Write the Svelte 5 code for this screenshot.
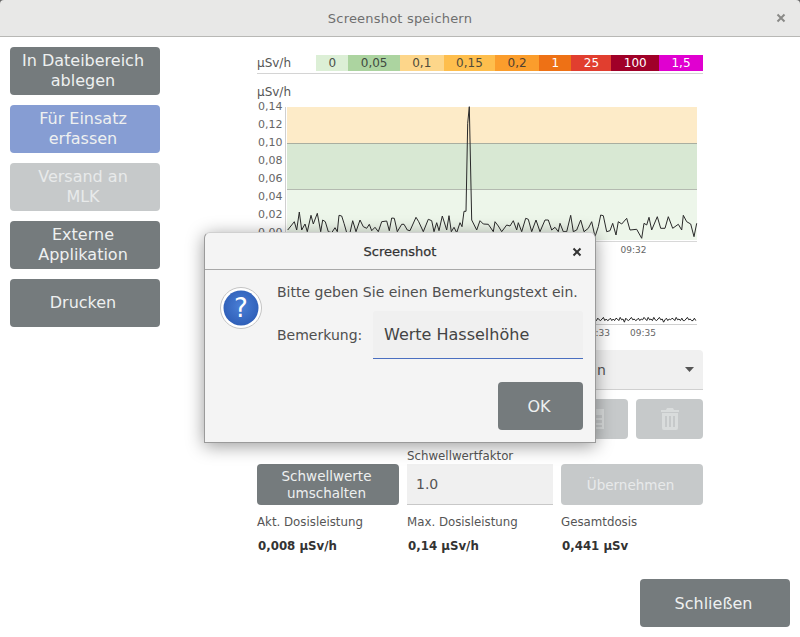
<script>
  const sideButtons = [
    { label: 'In Dateibereich ablegen', kind: 'dark' },
    { label: 'Für Einsatz erfassen', kind: 'blue' },
    { label: 'Versand an MLK', kind: 'off' },
    { label: 'Externe Applikation', kind: 'dark' },
    { label: 'Drucken', kind: 'dark' }
  ];

  const legend = [
    { text: '0', bg: '#dcefd6', fg: '#4a4f4a' },
    { text: '0,05', bg: '#acd4a0', fg: '#3f4a3f' },
    { text: '0,1', bg: '#fdd68a', fg: '#4f4a3a' },
    { text: '0,15', bg: '#febe4d', fg: '#4f4a3a' },
    { text: '0,2', bg: '#fb9d2c', fg: '#4f4030' },
    { text: '1', bg: '#ee7115', fg: '#fff' },
    { text: '25', bg: '#e13e2f', fg: '#fff' },
    { text: '100', bg: '#a00028', fg: '#fff' },
    { text: '1,5', bg: '#e000d0', fg: '#fff' }
  ];

  const ticks = ['0,14', '0,12', '0,10', '0,08', '0,06', '0,04', '0,02', '0,00'];

  // trace read off the reference at 3x, offset to the chart's own origin
  const raw = [
    113,570, 125,555, 133,545, 140,570, 148,516, 155,570, 165,552, 172,575, 183,526, 190,552, 202,520, 212,575,
    218,540, 226,545, 235,575, 245,578, 255,563, 262,575, 267,526, 275,528, 282,550, 290,578, 300,578, 308,542,
    318,575, 330,540, 340,560, 350,565, 358,553, 365,572, 375,562, 385,575, 395,545, 410,543, 418,572, 425,534,
    433,535, 442,575, 455,553, 462,553, 472,570, 480,572, 498,532, 506,545, 520,575, 535,538, 545,542, 552,575,
    560,548, 567,572, 577,528, 590,570, 597,527, 604,575, 612,562, 620,578, 630,548, 636,560, 642,514, 648,514,
    653,250, 658,200, 660,300, 665,540, 680,570, 690,542, 700,552, 715,553, 730,575, 735,545, 745,558, 755,575,
    770,555, 780,558, 790,542, 800,570, 805,548, 815,575, 827,535, 835,538, 845,575, 858,540, 870,575, 885,540,
    895,540, 905,570, 915,562, 925,575, 930,550, 940,575, 950,575, 962,526, 970,575, 980,570, 992,540, 1002,575,
    1015,565, 1025,545, 1035,590, 1045,560, 1052,525, 1060,527, 1070,575, 1080,572, 1088,550, 1098,585, 1105,545,
    1115,552, 1130,535, 1140,570, 1160,568, 1175,595, 1182,550, 1190,555, 1197,532, 1205,570, 1222,530, 1232,565,
    1245,565, 1255,530, 1268,565, 1285,553, 1295,570, 1300,526, 1310,545, 1322,552, 1332,590, 1340,550
  ];
  let trace = '';
  for (let i = 0; i < raw.length; i += 2) {
    trace += `${(raw[i] / 3 - 7).toFixed(1)},${(raw[i + 1] / 3 - 40).toFixed(1)} `;
  }

  // the small overview strip only shows past the dialog, a dense flat noise
  const wobble = [0, 2, -1, 1, 2, 0, -2, 1, 0, 2, 1, -1, 2, 0, 1, -1, 0, 2, -2, 1];
  let miniTrace = '';
  for (let x = 30, i = 0; x <= 440; x += 1.4, i++) {
    miniTrace += `${x.toFixed(1)},${61 + wobble[i % wobble.length] * (i % 7 === 3 ? 1.6 : 0.8)} `;
  }
</script>

<div class="window">
  <header class="titlebar">
    <span class="title">Screenshot speichern</span>
    <svg class="close" width="10" height="10" viewBox="0 0 10 10">
      <path d="M1.5 1.5l7 7M8.5 1.5l-7 7" stroke="#8a8a88" stroke-width="2" />
    </svg>
  </header>

  <div class="content">
    <aside class="side">
      {#each sideButtons as b}
        <button class="btn {b.kind}">{b.label}</button>
      {/each}
    </aside>

    <main class="main">
      <div class="legend">
        <span class="unit">µSv/h</span>
        <div class="scale">
          {#each legend as l}
            <span style="background:{l.bg};color:{l.fg}">{l.text}</span>
          {/each}
        </div>
      </div>

      <svg class="chart" width="446" height="178" viewBox="0 0 446 178">
        <text x="0" y="16" class="axis-unit">µSv/h</text>
        <rect x="30" y="27" width="410" height="36" fill="#fdebc8" />
        <rect x="30" y="63" width="410" height="46" fill="#d8e8d3" />
        <rect x="30" y="109" width="410" height="51" fill="#edf6ea" />
        <line x1="30" x2="440" y1="63.5" y2="63.5" stroke="#a9aea0" />
        <line x1="30" x2="440" y1="109.5" y2="109.5" stroke="#b4bab0" />
        <line x1="28.5" x2="28.5" y1="27" y2="162" stroke="#d0d0d0" />
        <line x1="30" x2="440" y1="161.5" y2="161.5" stroke="#d8d8d8" />
        {#each ticks as t, i}
          <text x="25.5" y={30 + i * 18} class="tick" text-anchor="end">{t}</text>
        {/each}
        <polyline points={trace} fill="none" stroke="#2a2a2a" stroke-width="1" />
        <text x="376.5" y="173" class="tick small" text-anchor="middle">09:32</text>
      </svg>

      <svg class="mini" width="446" height="82" viewBox="0 0 446 82">
        <polyline points={miniTrace} fill="none" stroke="#222" stroke-width="1" />
        <line x1="30" x2="440" y1="66.5" y2="66.5" stroke="#d0d0d0" />
        <text x="340" y="78" class="tick small" text-anchor="middle">09:33</text>
        <text x="386" y="78" class="tick small" text-anchor="middle">09:35</text>
      </svg>

      <div class="grid">
        <div class="select slot3">
          <span>1 min</span>
          <svg width="9" height="5" viewBox="0 0 9 5"><path d="M0 0h9L4.5 5z" fill="#555" /></svg>
        </div>
      </div>

      <div class="grid actions">
        <div class="icon-pair slot3">
          <button class="btn off icon" aria-label="Tabelle">
            <svg width="20" height="22" viewBox="0 0 20 22">
              <path fill="#d9dcdc" d="M1 1h18v20H1zM3 7v3h6V7zm8 0v3h6V7zM3 12v3h6v-3zm8 0v3h6v-3zM3 17v2h6v-2zm8 0v2h6v-2z" fill-rule="evenodd" />
            </svg>
          </button>
          <button class="btn off icon" aria-label="Löschen">
            <svg width="20" height="22" viewBox="0 0 20 22">
              <path fill="#d9dcdc" fill-rule="evenodd" d="M7 0h6l1 2h5v2H1V2h5zM2 5h16v15a2 2 0 0 1-2 2H4a2 2 0 0 1-2-2zm3 3v11h2V8zm4 0v11h2V8zm4 0v11h2V8z" />
            </svg>
          </button>
        </div>
      </div>

      <div class="grid factor">
        <div class="cell">
          <button class="btn dark small">Schwellwerte umschalten</button>
        </div>
        <div class="cell">
          <span class="field-label">Schwellwertfaktor</span>
          <div class="input">1.0</div>
        </div>
        <div class="cell">
          <button class="btn off apply">Übernehmen</button>
        </div>
      </div>

      <div class="grid stats">
        <div><p>Akt. Dosisleistung</p><b>0,008 µSv/h</b></div>
        <div><p>Max. Dosisleistung</p><b>0,14 µSv/h</b></div>
        <div><p>Gesamtdosis</p><b>0,441 µSv</b></div>
      </div>
    </main>
  </div>

  <footer class="footer">
    <button class="btn dark">Schließen</button>
  </footer>

  <div class="dialog">
    <div class="dialog-head">
      <span>Screenshot</span>
      <svg width="10" height="10" viewBox="0 0 10 10">
        <path d="M1.5 1.5l7 7M8.5 1.5l-7 7" stroke="#333" stroke-width="2" />
      </svg>
    </div>
    <div class="dialog-body">
      <svg class="question" width="42" height="42" viewBox="0 0 42 42">
        <defs>
          <radialGradient id="q" cx="50%" cy="45%" r="55%">
            <stop offset="0" stop-color="#4a7fd6" />
            <stop offset="1" stop-color="#2f5fb8" />
          </radialGradient>
        </defs>
        <circle cx="21" cy="21" r="20.5" fill="#fff" stroke="#c4c4c4" />
        <circle cx="21" cy="21" r="17.5" fill="url(#q)" />
        <text x="21" y="30" text-anchor="middle" class="q-mark">?</text>
      </svg>
      <div class="dialog-main">
        <p>Bitte geben Sie einen Bemerkungstext ein.</p>
        <div class="dialog-row">
          <label for="note">Bemerkung:</label>
          <div id="note" class="note">Werte Hasselhöhe</div>
        </div>
      </div>
    </div>
    <div class="dialog-foot">
      <button class="btn dark ok">OK</button>
    </div>
  </div>
</div>

<style>
  :global(body) {
    background: #fff;
  }
  .window {
    position: relative;
    width: 800px;
    height: 637px;
    overflow: hidden;
    background: #666;
    font-family: "DejaVu Sans", sans-serif;
    color: #444;
  }
  .titlebar {
    display: flex;
    align-items: center;
    justify-content: center;
    position: relative;
    height: 36px;
    background: #e8e8e7;
    border-bottom: 1px solid #b8b8b5;
    border-radius: 4px 4px 0 0;
  }
  .title {
    font-size: 13px;
    font-weight: 400;
    color: #6f6f6f;
    letter-spacing: 0.2px;
  }
  .close {
    position: absolute;
    right: 14px;
    top: 13px;
  }
  .content {
    display: flex;
    height: 526px;
    background: #fff;
  }
  .side {
    display: flex;
    flex-direction: column;
    gap: 10px;
    width: 150px;
    padding: 10px 0 0 10px;
  }
  .btn {
    display: block;
    border: none;
    border-radius: 4px;
    font-family: inherit;
    color: #eef0f0;
    text-align: center;
    padding: 0 10px 0 7px;
  }
  .side .btn {
    height: 48px;
    padding: 0 14px 0 10px;
    font-size: 16px;
    line-height: 20px;
  }
  .dark {
    background: #757b7d;
  }
  .blue {
    background: #869dd3;
  }
  .off {
    background: #c6c9ca;
    color: #e8eaea;
  }
  .main {
    width: 446px;
    margin-left: 97px;
    padding-top: 18px;
  }
  .legend {
    display: flex;
    align-items: flex-start;
    height: 17px;
    padding-bottom: 1px;
    border-bottom: 1px solid #d4d4d4;
  }
  .unit {
    width: 59px;
    font-size: 12px;
    line-height: 16px;
    color: #555;
  }
  .scale {
    display: flex;
    flex: 1;
  }
  .scale span {
    flex: auto;
    height: 16px;
    padding: 0 10px;
    font-size: 12px;
    line-height: 16px;
    text-align: center;
  }
  .chart, .mini {
    display: block;
  }
  .chart {
    margin-top: 6px;
  }
  .axis-unit {
    font-size: 12px;
    fill: #555;
  }
  .tick {
    font-size: 11px;
    fill: #666;
  }
  .tick.small {
    font-size: 9px;
  }
  .grid {
    display: grid;
    grid-template-columns: 142px 146px 142px;
    column-gap: 8px;
  }
  .slot3 {
    grid-column: 3;
  }
  .select {
    display: flex;
    align-items: center;
    justify-content: space-between;
    height: 40px;
    margin-top: 10px;
    padding: 0 9px 0 5px;
    border-radius: 4px 4px 0 0;
    background: #f0f0f0;
    border-bottom: 1px solid #d0d0d0;
    box-sizing: border-box;
    font-size: 14px;
    color: #555;
  }
  .actions {
    margin-top: 9px;
  }
  .icon-pair {
    display: grid;
    grid-template-columns: 67px 67px;
    column-gap: 8px;
  }
  .icon {
    display: flex;
    align-items: center;
    justify-content: center;
    height: 40px;
    padding: 0;
  }
  .factor {
    margin-top: 10px;
    align-items: end;
  }
  .cell .btn {
    width: 100%;
    height: 41px;
  }
  .small {
    font-size: 13.5px;
    line-height: 17px;
  }
  .apply {
    font-size: 13.5px;
  }
  .field-label {
    display: block;
    font-size: 11.8px;
    line-height: 15px;
    color: #555;
  }
  .input {
    height: 41px;
    box-sizing: border-box;
    padding: 0 9px;
    background: #f0f0f0;
    border-bottom: 1px solid #c8c8c8;
    font-size: 14px;
    line-height: 40px;
    color: #555;
  }
  .stats {
    margin-top: 10px;
  }
  .stats p {
    margin: 0;
    font-size: 11.8px;
    line-height: 14px;
    color: #555;
  }
  .stats b {
    display: block;
    margin-top: 10px;
    padding-left: 1px;
    font-size: 11.8px;
    line-height: 14px;
    color: #333;
  }
  .footer {
    display: flex;
    justify-content: flex-end;
    height: 74px;
    box-sizing: border-box;
    padding: 16px 10px 0 0;
    background: #fff;
  }
  .footer .btn {
    width: 150px;
    height: 48px;
    font-size: 16px;
  }
  .dialog {
    position: absolute;
    left: 204px;
    top: 232px;
    width: 392px;
    height: 211px;
    box-sizing: border-box;
    background: #f4f4f4;
    border: 1px solid #9a9a9a;
    border-top-color: #d0d0d0;
    border-radius: 6px 6px 0 0;
    box-shadow: 0 3px 18px rgba(0, 0, 0, 0.4);
  }
  .dialog-head {
    display: flex;
    align-items: center;
    justify-content: center;
    position: relative;
    height: 36px;
    border-bottom: 1px solid #a8a8a8;
    font-size: 13px;
    color: #333;
    -webkit-text-stroke: 0.25px #333;
  }
  .dialog-head svg {
    position: absolute;
    right: 13px;
    top: 14px;
  }
  .dialog-body {
    display: flex;
    padding: 14px 0 0 15px;
  }
  .question {
    margin-top: 3px;
    flex: none;
  }
  .q-mark {
    font-size: 26px;
    fill: #fff;
  }
  .dialog-main {
    margin-left: 15px;
  }
  .dialog-main p {
    margin: 0;
    font-size: 14px;
    line-height: 16px;
    color: #4f4f4f;
  }
  .dialog-row {
    display: flex;
    align-items: center;
    margin-top: 11px;
    font-size: 14px;
    color: #4f4f4f;
  }
  .dialog-row label {
    width: 96px;
  }
  .note {
    width: 210px;
    height: 48px;
    box-sizing: border-box;
    padding-left: 11px;
    background: #f0f0f0;
    border-bottom: 1px solid #4a6fc0;
    border-radius: 3px 3px 0 0;
    font-size: 16px;
    line-height: 47px;
    color: #444;
  }
  .dialog-foot {
    display: flex;
    justify-content: flex-end;
    padding: 23px 12px 0 0;
  }
  .ok {
    width: 85px;
    height: 48px;
    padding: 0 11px 0 8px;
    font-size: 16px;
  }
</style>
